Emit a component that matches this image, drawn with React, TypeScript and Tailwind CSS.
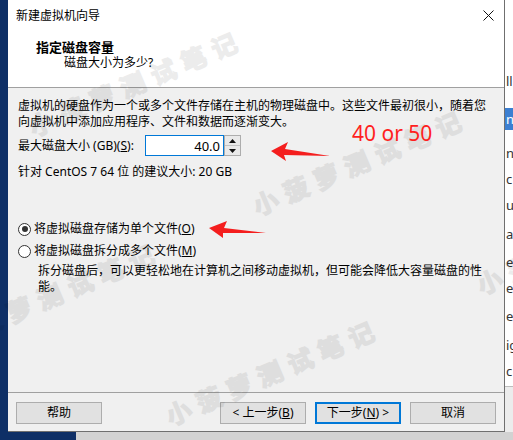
import React from 'react';

const font = 'font-["Noto_Sans","Noto_Sans_CJK_SC",sans-serif]';

function Btn({ children, focused }: { children: React.ReactNode; focused?: boolean }) {
  return (
    <div
      className={`w-[86px] h-[22px] flex items-center justify-center text-[12px] leading-none text-black bg-[#e1e1e1] ${
        focused ? 'border-2 border-[#0078d7]' : 'border border-[#adadad]'
      }`}
    >
      {children}
    </div>
  );
}

function Radio({ checked }: { checked?: boolean }) {
  return (
    <span className="w-[13px] h-[13px] rounded-full border border-[#333] bg-white flex items-center justify-center shrink-0">
      {checked && <span className="w-[6px] h-[6px] rounded-full bg-[#333]" />}
    </span>
  );
}

function Spinner() {
  return (
    <div className="w-[17px] h-[21px] flex flex-col border border-[#adadad] bg-[#e9e9e9]">
      <div className="flex-1 flex items-center justify-center border-b border-[#c4c4c4]">
        <svg width="7" height="4" viewBox="0 0 7 4">
          <polygon points="3.5,0 7,4 0,4" fill="#111" />
        </svg>
      </div>
      <div className="flex-1 flex items-center justify-center">
        <svg width="7" height="4" viewBox="0 0 7 4">
          <polygon points="0,0 7,0 3.5,4" fill="#111" />
        </svg>
      </div>
    </div>
  );
}

function Dialog() {
  return (
    <div className="w-[497px] h-[432px] flex flex-col bg-[#f0f0f0] border-r border-b border-[#6f6f6f]">
      {/* title bar */}
      <div className="h-[31px] bg-white flex items-center justify-between pl-[8px] pr-[10px]">
        <span className="text-[12px] leading-none text-black">新建虚拟机向导</span>
        <svg width="11" height="11" viewBox="0 0 11 11">
          <path d="M0.5 0.5 L10.5 10.5 M10.5 0.5 L0.5 10.5" stroke="#111" strokeWidth="1" />
        </svg>
      </div>

      {/* header */}
      <div className="h-[56px] bg-white pl-[28px] pt-[8px]">
        <div className="text-[13px] leading-[16px] font-bold text-black">指定磁盘容量</div>
        <div className="text-[12px] leading-[16px] text-black ml-[28px]">磁盘大小为多少?</div>
      </div>
      <div className="h-px bg-[#a0a0a0]" />

      {/* body */}
      <div className="flex-1 flex flex-col px-[10px] text-[12px] leading-[16px] text-black whitespace-nowrap">
        <p className="mt-[10px]">
          虚拟机的硬盘作为一个或多个文件存储在主机的物理磁盘中。这些文件最初很小，随着您
          <br />
          向虚拟机中添加应用程序、文件和数据而逐渐变大。
        </p>

        <div className="mt-[5px] h-[21px] flex items-center">
          <span className="w-[127px]">
            最大磁盘大小 (GB)(<span className="underline">S</span>):
          </span>
          <div className="w-[79px] h-[21px] border border-[#0078d7] bg-white flex items-center justify-end pr-[3px] text-[13px]">
            40.0
          </div>
          <Spinner />
        </div>

        <p className="mt-[8px]">针对 CentOS 7 64 位 的建议大小: 20 GB</p>

        <div className="mt-[41px] flex items-center gap-[3px]">
          <Radio checked />
          <span>
            将虚拟磁盘存储为单个文件(<span className="underline">O</span>)
          </span>
        </div>
        <div className="mt-[6px] flex items-center gap-[3px]">
          <Radio />
          <span>
            将虚拟磁盘拆分成多个文件(<span className="underline">M</span>)
          </span>
        </div>
        <p className="mt-[4px] ml-[20px]">
          拆分磁盘后，可以更轻松地在计算机之间移动虚拟机，但可能会降低大容量磁盘的性
          <br />
          能。
        </p>
      </div>

      {/* footer */}
      <div className="h-px bg-[#a0a0a0]" />
      <div className="flex items-start px-[8px] pt-[9px] pb-[7px]">
        <Btn>帮助</Btn>
        <div className="flex-1" />
        <div className="flex gap-[9px]">
          <Btn>
            &lt; 上一步(<span className="underline">B</span>)
          </Btn>
          <Btn focused>
            下一步(<span className="underline">N</span>) &gt;
          </Btn>
          <Btn>取消</Btn>
        </div>
      </div>
    </div>
  );
}

function RightStrip() {
  return (
    <div className="w-[8px] h-[432px] overflow-hidden bg-white flex flex-col text-[13px] leading-[26px] text-[#333] pl-[1px]">
      <div className="h-[68px]" />
      <div>ll</div>
      <div className="h-[14px]" />
      <div className="h-[22px] leading-[22px] bg-[#3c7fd1] text-white -ml-[1px] pl-[1px]">n</div>
      <div className="mt-[10px]">n</div>
      <div>c</div>
      <div>u</div>
      <div className="mt-[3px]">a</div>
      <div className="mt-[2px]">e</div>
      <div>e</div>
      <div className="mt-[2px]">e</div>
      <div className="mt-[3px]">ig</div>
      <div>c</div>
      <div className="h-px bg-[#bdbdbd] mt-[2px] -ml-[1px]" />
      <div className="flex-1 bg-[#ececec] -ml-[1px]" />
    </div>
  );
}

const wm =
  'absolute whitespace-nowrap text-[25px] leading-[26px] font-bold tracking-[8px] text-black opacity-[0.07] [-webkit-text-stroke:1.5px_black] origin-[0_50%] rotate-[-23deg] pointer-events-none';

export default function App() {
  return (
    <div className={`${font} relative w-[513px] h-[440px] overflow-hidden bg-[#0e2f66] flex flex-col`}>
      <div className="flex h-[432px]">
        <div className="w-[8px] bg-[#0e2f66]" />
        <Dialog />
        <RightStrip />
      </div>
      <div className="flex h-[8px]">
        <div className="w-[76px] bg-[#0e2f66]" />
        <div className="flex-1 bg-[#d2d2d2]" />
      </div>

      {/* watermarks */}
      <span className={`${wm} left-[30px] top-[115px]`}>小菠萝测试笔记</span>
      <span className={`${wm} left-[254px] top-[194px]`}>小菠萝测试笔记</span>
      <span className={`${wm} left-[167px] top-[404px]`}>小菠萝测试笔记</span>
      <span className={`${wm} left-[-53px] top-[327px]`}>小菠萝测试笔记</span>
      <span className={`${wm} left-[478px] top-[273px]`}>小菠萝测试笔记</span>

      {/* red annotations */}
      <span className="absolute left-[352px] top-[123px] text-[21px] leading-[21px] text-[#ff1f1f] whitespace-nowrap">
        40 or 50
      </span>
      <svg className="absolute left-0 top-0 pointer-events-none" width="513" height="440" viewBox="0 0 513 440">
        <polygon points="271,151 288,142 285,149 330,156 284,155 286,161" fill="#f41e1e" />
        <polygon points="209,228 227,221 224,228 266,233 223,233 223,238" fill="#f41e1e" />
      </svg>
    </div>
  );
}
